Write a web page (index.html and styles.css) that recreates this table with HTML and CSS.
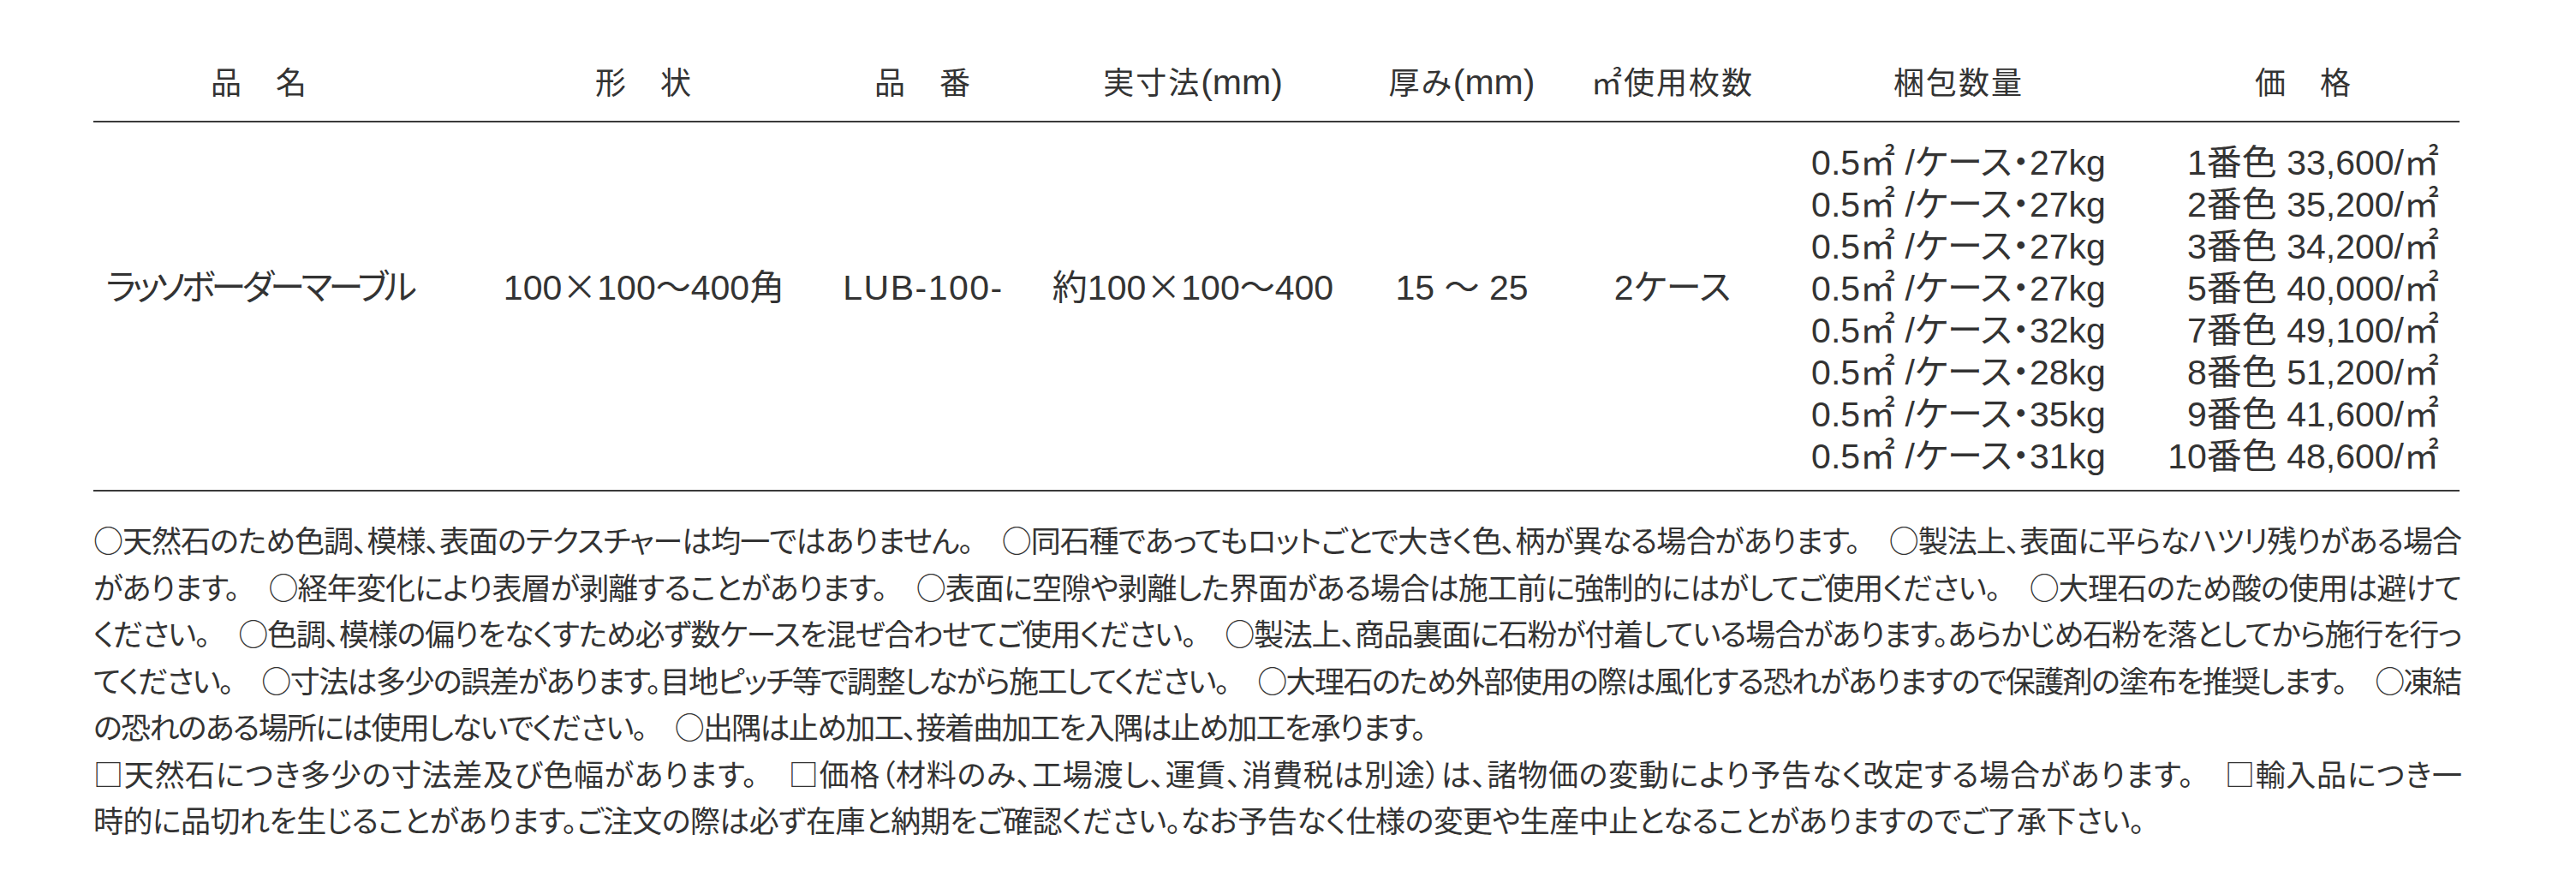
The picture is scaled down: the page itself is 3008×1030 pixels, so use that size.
FILE: index.html
```html
<!DOCTYPE html>
<html lang="ja">
<head>
<meta charset="utf-8">
<title>ラッソボーダーマーブル</title>
<link rel="stylesheet" href="styles.css">
</head>
<body>
<div class="sheet">
  <div class="spec">
    <div class="spec-row spec-head">
      <div class="c c1">品　名</div>
      <div class="c">形　状</div>
      <div class="c">品　番</div>
      <div class="c">実寸法<span class="lat">(mm)</span></div>
      <div class="c">厚み<span class="lat">(mm)</span></div>
      <div class="c">㎡使用枚数</div>
      <div class="c">梱包数量</div>
      <div class="c c8">価　格</div>
    </div>
    <div class="spec-row spec-body">
      <div class="c c1 single name">ラッソボーダーマーブル</div>
      <div class="c single"><span class="lat">100</span>×<span class="lat">100</span>～<span class="lat">400</span>角</div>
      <div class="c single"><span class="lat code">LUB-100-</span></div>
      <div class="c single">約<span class="lat">100</span>×<span class="lat">100</span>～<span class="lat">400</span></div>
      <div class="c single"><span class="lat">15 </span>～<span class="lat"> 25</span></div>
      <div class="c single"><span class="lat">2</span>ケース</div>
      <div class="c pack">
        <div><span class="lat">0.5</span>㎡<span class="lat"> /</span>ケース・<span class="lat">27kg</span></div>
        <div><span class="lat">0.5</span>㎡<span class="lat"> /</span>ケース・<span class="lat">27kg</span></div>
        <div><span class="lat">0.5</span>㎡<span class="lat"> /</span>ケース・<span class="lat">27kg</span></div>
        <div><span class="lat">0.5</span>㎡<span class="lat"> /</span>ケース・<span class="lat">27kg</span></div>
        <div><span class="lat">0.5</span>㎡<span class="lat"> /</span>ケース・<span class="lat">32kg</span></div>
        <div><span class="lat">0.5</span>㎡<span class="lat"> /</span>ケース・<span class="lat">28kg</span></div>
        <div><span class="lat">0.5</span>㎡<span class="lat"> /</span>ケース・<span class="lat">35kg</span></div>
        <div><span class="lat">0.5</span>㎡<span class="lat"> /</span>ケース・<span class="lat">31kg</span></div>
      </div>
      <div class="c c8 price">
        <div><span class="lat">1</span>番色<span class="lat"> 33,600/</span>㎡</div>
        <div><span class="lat">2</span>番色<span class="lat"> 35,200/</span>㎡</div>
        <div><span class="lat">3</span>番色<span class="lat"> 34,200/</span>㎡</div>
        <div><span class="lat">5</span>番色<span class="lat"> 40,000/</span>㎡</div>
        <div><span class="lat">7</span>番色<span class="lat"> 49,100/</span>㎡</div>
        <div><span class="lat">8</span>番色<span class="lat"> 51,200/</span>㎡</div>
        <div><span class="lat">9</span>番色<span class="lat"> 41,600/</span>㎡</div>
        <div><span class="lat">10</span>番色<span class="lat"> 48,600/</span>㎡</div>
      </div>
    </div>
  </div>

  <div class="notes">
    <p class="para">
      <span class="ln">○天然石のため色調、模様、表面のテクスチャーは均一ではありません。　○同石種であってもロットごとで大きく色、柄が異なる場合があります。　○製法上、表面に平らなハツリ残りがある場合</span>
      <span class="ln">があります。　○経年変化により表層が剥離することがあります。　○表面に空隙や剥離した界面がある場合は施工前に強制的にはがしてご使用ください。　○大理石のため酸の使用は避けて</span>
      <span class="ln">ください。　○色調、模様の偏りをなくすため必ず数ケースを混ぜ合わせてご使用ください。　○製法上、商品裏面に石粉が付着している場合があります。あらかじめ石粉を落としてから施行を行っ</span>
      <span class="ln">てください。　○寸法は多少の誤差があります。目地ピッチ等で調整しながら施工してください。　○大理石のため外部使用の際は風化する恐れがありますので保護剤の塗布を推奨します。　○凍結</span>
      <span class="ln last tight">の恐れのある場所には使用しないでください。　○出隅は止め加工、接着曲加工を入隅は止め加工を承ります。</span>
    </p>
    <p class="para">
      <span class="ln">□天然石につき多少の寸法差及び色幅があります。　□価格（材料のみ、工場渡し、運賃、消費税は別途）は、諸物価の変動により予告なく改定する場合があります。　□輸入品につき一</span>
      <span class="ln last loose">時的に品切れを生じることがあります。ご注文の際は必ず在庫と納期をご確認ください。なお予告なく仕様の変更や生産中止となることがありますのでご了承下さい。</span>
    </p>
  </div>
</div>
</body>
</html>
```

FILE: styles.css
```css
html, body {
  margin: 0;
  padding: 0;
  background: #ffffff;
}

body {
  color: #333333;
  font-family: "Noto Sans CJK JP", "Noto Sans", sans-serif;
  font-weight: 400;
  font-feature-settings: "palt";
}

.sheet {
  width: 2763px;
  padding-left: 109px;
}

.spec-row {
  display: grid;
  grid-template-columns: 417px 452px 200px 430px 198px 294px 374px 398px;
  border-bottom: 2px solid #3a3a3a;
}

.c {
  text-align: center;
  white-space: nowrap;
}

.c1 {
  padding-right: 29px;
}

.lat {
  font-family: "Liberation Sans", "Noto Sans CJK JP", sans-serif;
  font-size: 41px;
  line-height: 1;
  letter-spacing: 0;
}

.spec-head {
  font-size: 36px;
  line-height: 48px;
  letter-spacing: 2px;
  padding-top: 70px;
  padding-bottom: 23px;
}

.spec-head .c8 {
  padding-left: 34px;
}

.spec-body {
  font-size: 41px;
  line-height: 48.8px;
  padding-top: 19px;
  padding-bottom: 18px;
  align-items: center;
}

.spec-body .single {
  padding-bottom: 52px;
}

.spec-body .name {
  letter-spacing: -4.5px;
}

.spec-body .code {
  letter-spacing: 1.5px;
}

.spec-body .price {
  text-align: right;
  padding-right: 24px;
}

.notes {
  margin-top: 29px;
  font-size: 35px;
  line-height: 54.5px;
}

.para {
  margin: 0;
}

.ln {
  display: block;
  letter-spacing: -3px;
  text-align: justify;
  text-align-last: justify;
}

.ln.last {
  text-align-last: left;
}

.ln.tight {
  letter-spacing: -1.7px;
}

.ln.loose {
  letter-spacing: -0.55px;
}
```
